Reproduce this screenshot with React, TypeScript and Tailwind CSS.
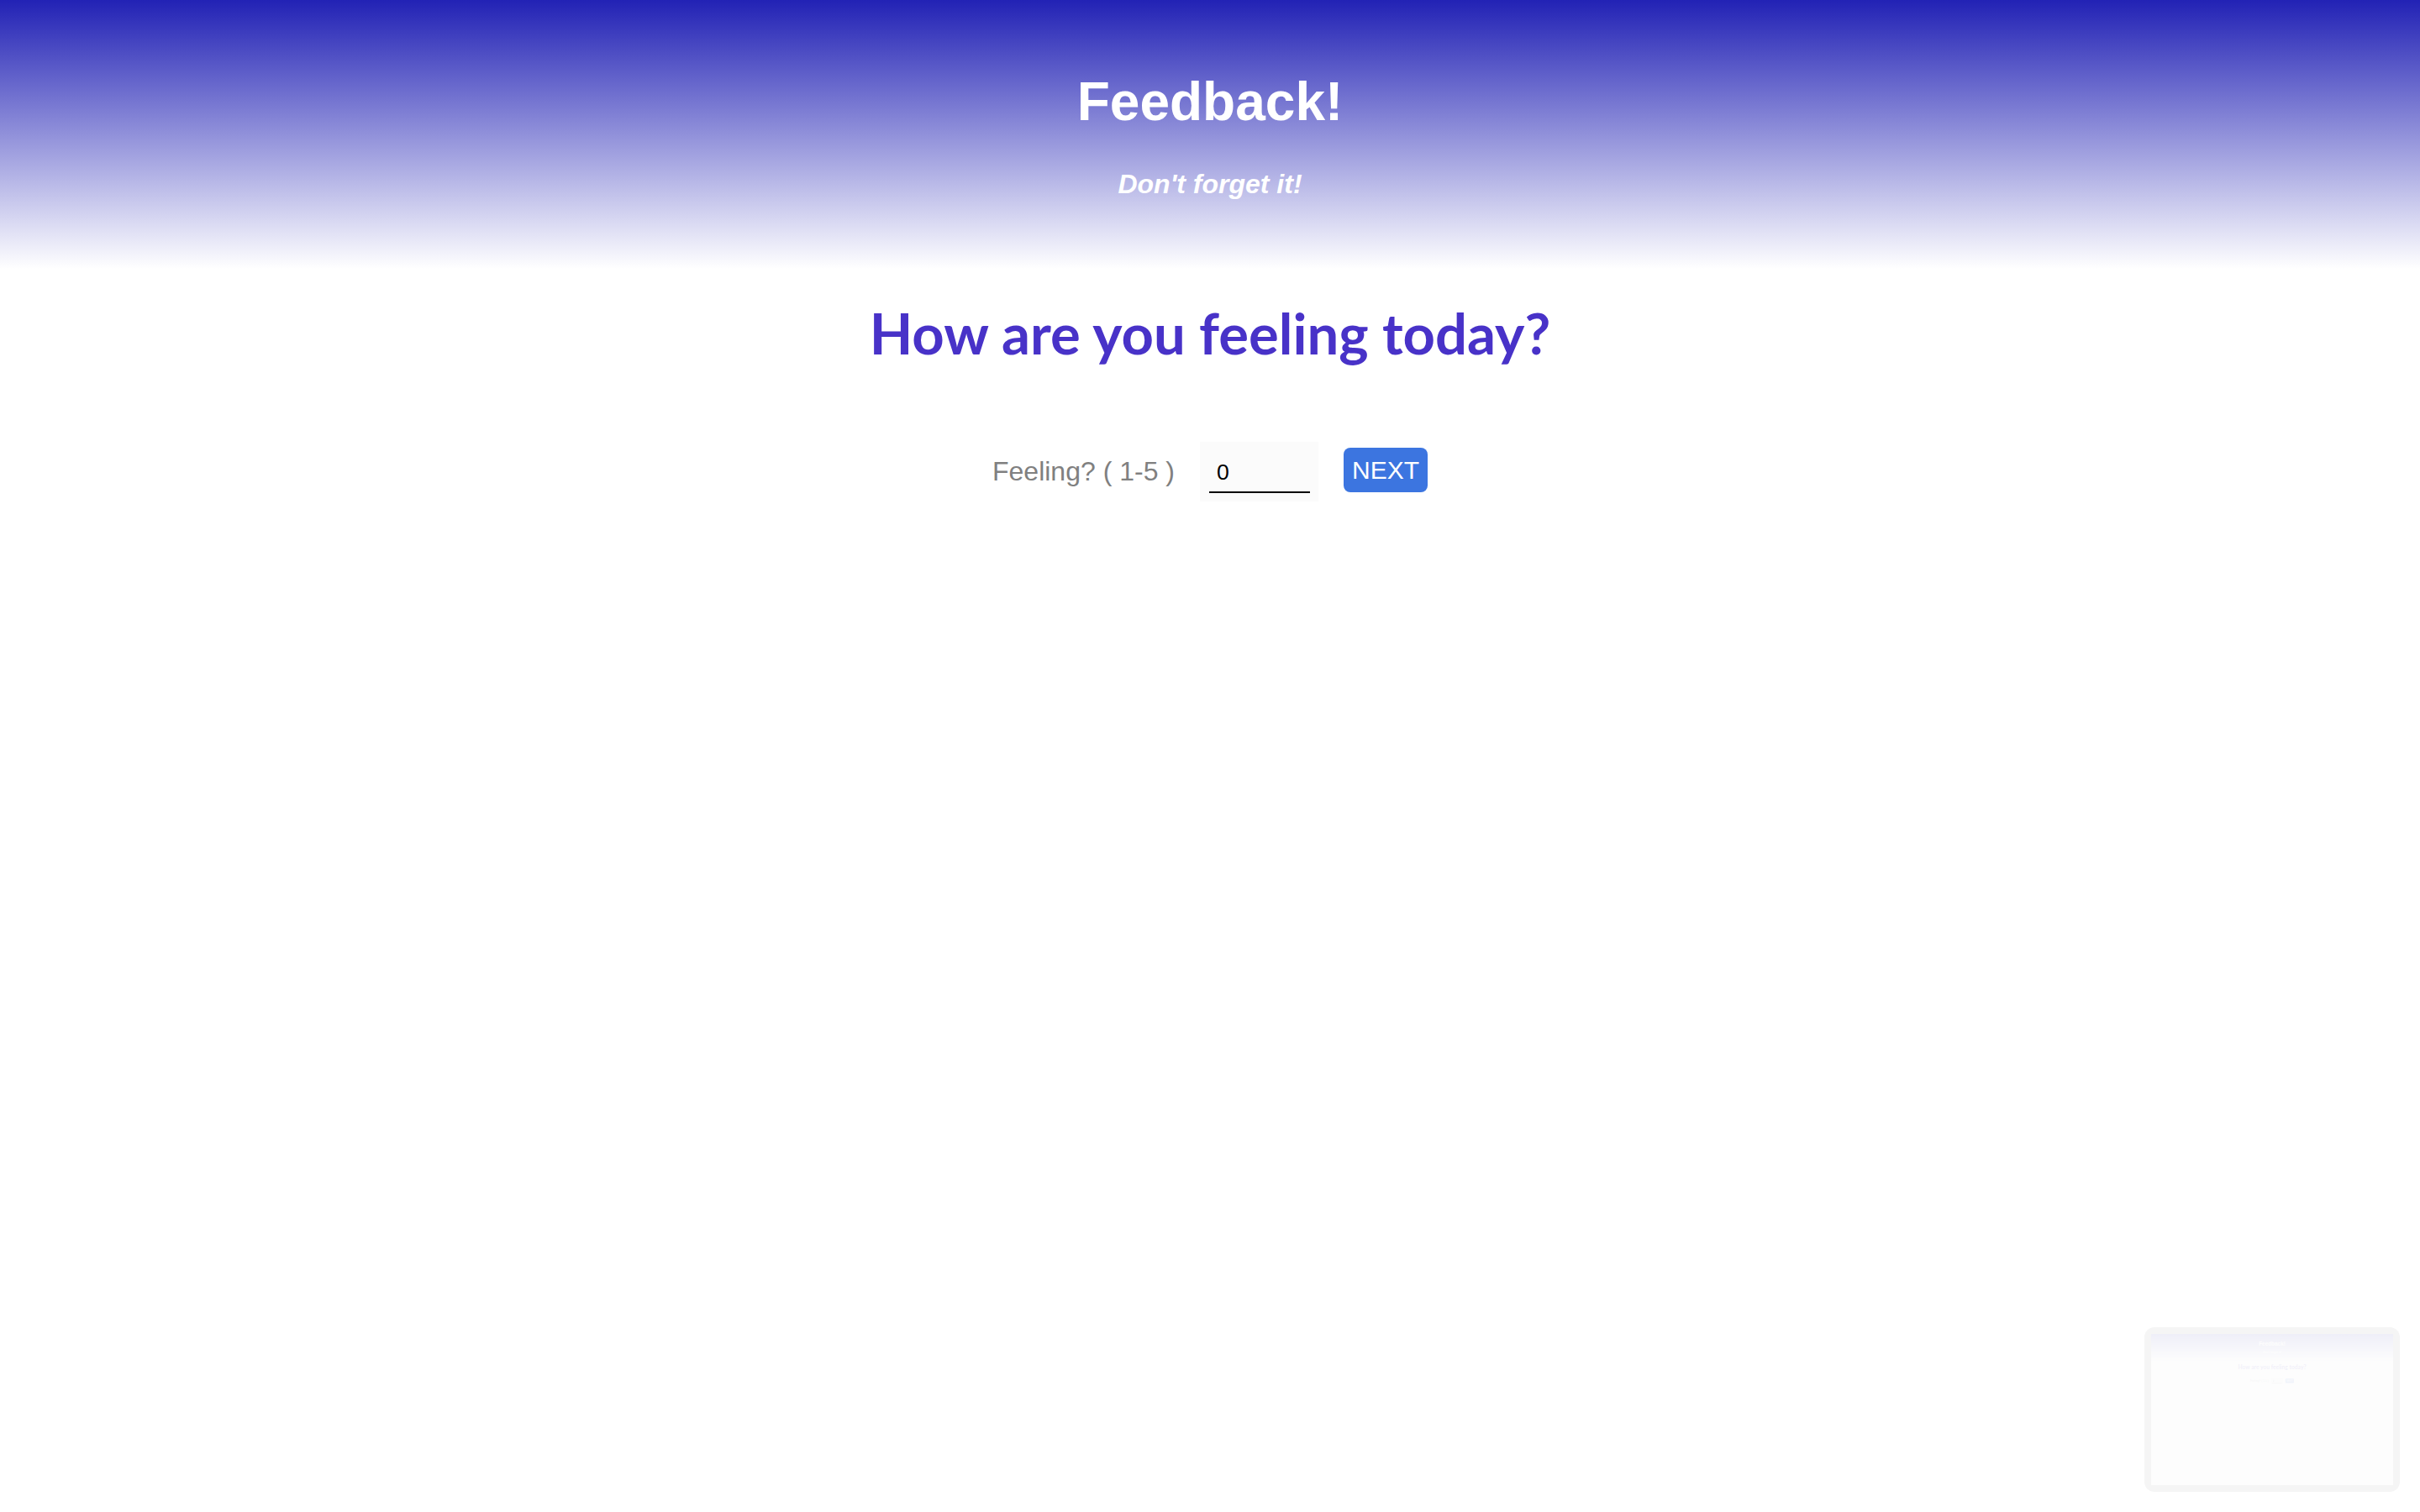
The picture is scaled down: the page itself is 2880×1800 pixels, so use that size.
import React from "react";

function Page() {
  return (
    <div className="w-full bg-white">
      <header className="flex h-[320px] flex-col items-center bg-[linear-gradient(to_bottom,#2222b5,#ffffff)] pt-[89px]">
        <h1 className="font-['Liberation_Sans',Arial,sans-serif] text-[64px] font-bold leading-[64px] text-white">
          Feedback!
        </h1>
        <p className="mt-[50px] font-['Liberation_Sans',Arial,sans-serif] text-[32px] font-bold italic leading-[32px] text-white">
          Don't forget it!
        </p>
      </header>
      <main className="flex flex-col items-center">
        <h2 className="mt-[43px] font-['Lato',sans-serif] text-[67px] font-bold leading-[67px] text-[#4832c8]">
          How are you feeling today?
        </h2>
        <div className="mt-[96px] flex items-start gap-[30px] font-['Liberation_Sans',Arial,sans-serif]">
          <span className="mt-[15px] text-[32px] leading-[40px] text-[#808080]">Feeling? ( 1-5 )</span>
          <div className="flex h-[71px] w-[141px] items-start bg-[#fbfbfb] px-[11px] pt-[20px]">
            <input
              type="text"
              defaultValue="0"
              className="h-[41px] w-[120px] border-b-2 border-black bg-transparent px-[9px] pb-[7px] text-[26.67px] leading-[30px] text-black outline-none"
            />
          </div>
          <button className="mt-[7px] h-[53px] w-[100px] rounded-[8px] bg-[#3c75e0] text-[30px] leading-[53px] text-white">
            NEXT
          </button>
        </div>
      </main>
    </div>
  );
}

export default function App() {
  return (
    <div className="relative h-[1800px] w-full overflow-hidden bg-white">
      <Page />
      <div className="absolute left-[2552px] top-[1580px] h-[196px] w-[304px] rounded-[12px] bg-[#f5f5f5] p-[8px]">
        <div className="relative h-[180px] w-[288px] overflow-hidden bg-[#fdfdfd]">
          <div className="absolute left-0 top-0 h-[1800px] w-[2880px] origin-top-left scale-[0.1] opacity-[0.06]">
            <Page />
          </div>
        </div>
      </div>
    </div>
  );
}
